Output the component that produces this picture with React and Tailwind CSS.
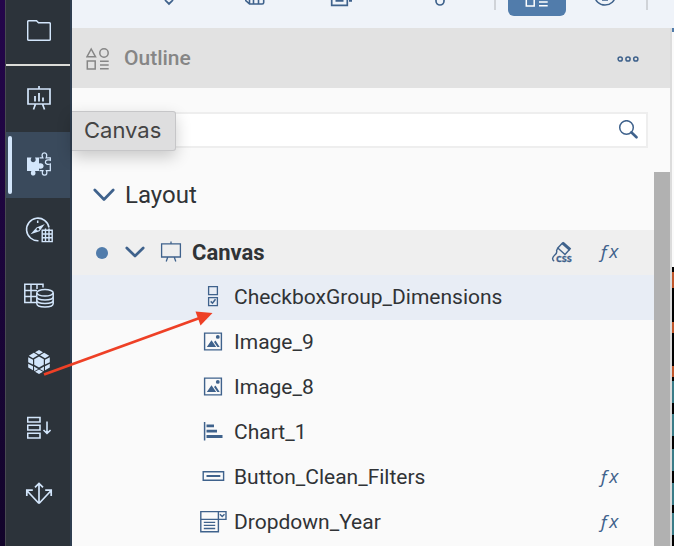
import React from "react";

function Icon({ size = 24, className = "", children }) {
  return (
    <svg
      width={size}
      height={size}
      viewBox={`0 0 ${size} ${size}`}
      fill="none"
      stroke="currentColor"
      strokeWidth="1.5"
      className={`shrink-0 ${className}`}
      aria-hidden="true"
    >
      {children}
    </svg>
  );
}

const FolderIcon = () => (
  <Icon>
    <path d="M.7 2.8Q.7 1.7 1.8 1.7H9.5L11.5 3.7H22.2Q23.3 3.7 23.3 4.8V20.2Q23.3 21.3 22.2 21.3H1.8Q.7 21.3 .7 20.2Z" />
  </Icon>
);

const BoardChartIcon = () => (
  <Icon>
    <path d="M1 3H23V18H1ZM12 0V3M8.5 18L6.5 23.5M15.5 18L17.5 23.5" strokeWidth="1.7" />
    <path d="M8 15.5V10M12 15.5V7M16 15.5V11.5" strokeWidth="1.8" />
  </Icon>
);

const PuzzleIcon = () => (
  <Icon>
    <path
      d="M0 5.5H4.5C3 8 4 10.2 6.2 10.2S9.5 8 8 5.5H12V11.5C14.5 10.6 16.6 11.9 16.6 14S14.5 17.4 12 16.4V19H8C9.2 21.5 8.3 23.5 6.2 23.5S3.2 21.5 4.4 19H0Z"
      fill="currentColor"
      stroke="none"
    />
    <path
      d="M12.5 5.8H15.8C14.3 3 15.3 .9 17.4 .9S20.4 3 19.2 5.8H23.3V8.2C20.6 7.2 18.4 8.3 18.4 10.2S20.6 13 23.3 12V18.6H19.4C20.6 21.2 19.6 23.2 17.6 23.2S14.5 21.2 15.8 18.6H12.5"
      strokeWidth="1.3"
    />
  </Icon>
);

const CompassGridIcon = () => (
  <Icon size={28}>
    <path d="M13.5 24.7A11.3 11.3 0 1 1 24 11.5" strokeWidth="1.6" />
    <path d="M5.5 18.3L11.5 11.5L19.8 8L14.5 15.2Z" fill="currentColor" stroke="none" />
    <circle cx="12.9" cy="13.2" r="1.3" fill="#2c333a" stroke="none" />
    <path d="M12.7 4.5V7" />
    <path d="M17.2 14.2H27.2V25.6H17.2ZM20.5 12.5V25.5M24 12.5V25.5M17.2 18H27M17.2 21.8H27" strokeWidth="1.4" />
  </Icon>
);

const GridDatabaseIcon = () => (
  <Icon size={30}>
    <path d="M13 21.5H.8V3.2H19V6.5M.8 9.5H13M.8 15.5H12M7 3.2V21.5M13 3.2V8" />
    <ellipse cx="21" cy="11.8" rx="8.2" ry="3.3" />
    <path d="M12.8 12V22.5C12.8 24.5 16.3 26 21 26S29.2 24.5 29.2 22.5V12M12.8 15.5C12.8 17.5 16.3 19 21 19S29.2 17.5 29.2 15.5M12.8 19C12.8 21 16.3 22.5 21 22.5S29.2 21 29.2 19" />
  </Icon>
);

const HexagonsIcon = () => (
  <Icon>
    <g fill="currentColor" stroke="none">
      <path d="M12 0L16 2.2L12 4.4L8 2.2ZM12 24L8 21.8L12 19.6L16 21.8Z" />
      <path d="M12 6.4L16.8 9.2V14.8L12 17.6L7.2 14.8V9.2Z" />
      <path d="M6.8 2.8L11 5.2L6 8.2L1.8 5.8ZM17.2 2.8L13 5.2L18 8.2L22.2 5.8Z" />
      <path d="M1.2 7.3L6 9.8V14.6L1.2 12.2ZM22.8 7.3L18 9.8V14.6L22.8 12.2Z" />
      <path d="M1.2 13.8L6 16.3V20.2L1.2 17.6ZM22.8 13.8L18 16.3V20.2L22.8 17.6Z" />
      <path d="M7 16.6L11.2 19L7.2 21.2ZM17 16.6L12.8 19L16.8 21.2Z" />
    </g>
  </Icon>
);

const StackDownIcon = () => (
  <Icon>
    <path d="M.7 1.5H13V6H.7ZM.7 9.3H13V14H.7ZM.7 17.3H13V22H.7ZM20 5.5V17M16.5 14L20 17.3L23.6 14" strokeWidth="1.6" />
  </Icon>
);

const SpreadArrowsIcon = () => (
  <Icon size={28}>
    <path d="M14 3.5V23.5M10 7.3L14 3.5L18 7.3M14 23.5L1.8 10.5M14 23.5L26.2 10.5M1.8 16V10.2H7.8M26.2 16V10.2H20.2" strokeWidth="1.7" />
  </Icon>
);

const ShapesIcon = ({ className }) => (
  <Icon className={className}>
    <path d="M5.2 2L9.5 9.8H.9ZM1.3 14H9.2V22H1.3Z" />
    <circle cx="18" cy="6" r="4.2" />
    <path d="M14 14.2H22.7M14 18H22.7M14 21.7H22.7" />
  </Icon>
);

const DotsIcon = () => (
  <Icon>
    <circle cx="4.2" cy="12" r="2.1" />
    <circle cx="12" cy="12" r="2.1" />
    <circle cx="19.8" cy="12" r="2.1" />
  </Icon>
);

const SearchIcon = () => (
  <Icon size={20}>
    <circle cx="8.500" cy="7.500" r="6.800" strokeWidth="1.5" />
    <path d="M13.3 12.3L18.5 17.3" strokeWidth="2.6" strokeLinecap="round" />
  </Icon>
);

const ChevronIcon = ({ size }) => (
  <Icon size={size}>
    <path
      d={size === 22 ? "M1.800 6L11 15.500L20.200 6" : "M1.800 5L10 13L18.200 5"}
      strokeWidth="2.7"
      strokeLinecap="round"
      strokeLinejoin="round"
    />
  </Icon>
);

const BoardIcon = () => (
  <Icon>
    <path d="M2.6 2.8H21.4V16H2.6ZM12 .5V2.8M8.8 16L7.2 20.5M15.2 16L16.8 20.5" strokeWidth="1.3" />
  </Icon>
);

const CheckboxGroupIcon = () => (
  <Icon>
    <path d="M7.6 .6H16.4V8.6H7.6ZM7.6 11.6H16.4V19.6H7.6Z" strokeWidth="1.3" />
    <path d="M9.7 15.4L11.5 17.2L14.5 13.3" strokeWidth="1.5" />
  </Icon>
);

const ImageIcon = () => (
  <Icon>
    <path d="M3.6 2.1H20.4V18.900H3.6Z" strokeWidth="1.4" />
    <path d="M5.8 16.1L10.5 9.3L15.2 16.1ZM13 11L14.5 9.5L18.7 16.1H16.4Z" fill="currentColor" stroke="none" />
    <circle cx="16.8" cy="5.900" r="1.9" fill="currentColor" stroke="none" />
  </Icon>
);

const BarChartIcon = () => (
  <Icon>
    <path d="M3.6 1V19.5" />
    <path d="M5.5 4.8H13M5.5 10.2H16M5.5 15.5H21.5" strokeWidth="2.8" />
  </Icon>
);

const ButtonIcon = () => (
  <Icon>
    <path d="M2.2 5.7H22.6V14.3H2.2Z" strokeWidth="1.4" />
    <path d="M5.500 10H19.300" strokeWidth="2" />
  </Icon>
);

const DropdownIcon = () => (
  <Icon size={28}>
    <path d="M1.8 2.6H27V10.4H1.8ZM1.8 10.4V22.8H19.4V2.6" strokeWidth="1.4" />
    <path d="M4.8 13.4H16.2M4.8 16.4H16.2M4.8 19.5H16.2M20.9 5.3L23.2 7.6L25.5 5.3" strokeWidth="1.4" />
  </Icon>
);

function StyleIcon() {
  return (
    <Icon>
      <path d="M12.500 2L19.500 8.500L15 13.500L7.800 7Z" strokeWidth="1.4" />
      <path d="M12.500 1.800L20.200 8.600" strokeWidth="3" />
      <path d="M7.800 7L6.600 9.500C7.400 12 6.200 12.900 4.800 14C2.200 16.200 1.800 19 4.200 20" strokeWidth="1.4" />
      <text x="6" y="20.500" fontSize="9" fontWeight="700" fontFamily="Open Sans, sans-serif" fill="currentColor" stroke="currentColor" strokeWidth=".3">
        CSS
      </text>
    </Icon>
  );
}

const navItems = [
  { label: "Files", icon: <FolderIcon /> },
  { label: "Stories", icon: <BoardChartIcon /> },
  { label: "Analytic Applications", icon: <PuzzleIcon />, active: true },
  { label: "Data Analyzer", icon: <CompassGridIcon /> },
  { label: "Datasets", icon: <GridDatabaseIcon /> },
  { label: "Modeler", icon: <HexagonsIcon /> },
  { label: "Data Actions", icon: <StackDownIcon /> },
  { label: "Allocations", icon: <SpreadArrowsIcon /> },
];

function SideNav() {
  return (
    <nav className="w-[66px] shrink-0 border-r-2 border-[#2f3e50] bg-[#2c333a] text-[#d3e6fb]">
      <ul>
        {navItems.map((item, i) => (
          <li
            key={item.label}
            className={`relative h-[66px] ${i === 0 ? "border-b-2 border-[#dcdcd8]" : ""} ${item.active ? "bg-[#3a4a5c]" : ""}`}
          >
            <button aria-label={item.label} className="flex h-full w-full items-center justify-center pb-[3px] pl-[2px]">
              {item.icon}
            </button>
            {item.active && (
              <>
                <span className="absolute inset-y-1 left-[2px] w-1 rounded-full bg-[#d3e6fb]" />
                <div
                  role="tooltip"
                  className="absolute -top-[21px] left-[66px] z-10 h-10 rounded-r-[3px] border border-l-0 border-[#c6c6c8] bg-[#dededf] pr-[14px] pl-3 font-['Inter',sans-serif] text-[22px] leading-[37px] text-[#444] shadow-[0_6px_16px_rgba(0,0,0,0.2)]"
                >
                  Canvas
                </div>
              </>
            )}
          </li>
        ))}
      </ul>
    </nav>
  );
}

function Toolbar() {
  const tool = "flex h-10 w-[58px] shrink-0 items-center justify-center rounded-md";
  return (
    <div role="toolbar" className="flex h-7 shrink-0 items-end overflow-hidden bg-[#eff3f9] pb-3 pl-[68px] text-[#3f628c]">
      <div className="flex gap-7">
        <button aria-label="Settings" className={tool}>
          <Icon size={20}><path d="M6.500 0V14.500L10 18L13.500 14.500V0" strokeWidth="1.8" /></Icon>
        </button>
        <button aria-label="Data" className={tool}>
          <Icon size={20}><path d="M.7 1H18.700V16.5Q18.700 18 17.200 18H4.5L.7 14.5ZM4.5 10V18M8.5 10V18M13.5 10V18" strokeWidth="1.6" /></Icon>
        </button>
        <button aria-label="Insert" className={tool}>
          <Icon><path d="M2.7 3H18.3V21.3H2.7ZM6.5 16.8H14.5M20 16.800H23" strokeWidth="1.7" /></Icon>
        </button>
      </div>
      <button aria-label="Attach" className={`${tool} ml-[41px]`}>
        <Icon><path d="M8 3V17A4 4 0 0 0 16 17V3" strokeWidth="1.7" /></Icon>
      </button>
      <div className="ml-[25px] flex h-10 items-center gap-3">
        <span className="h-7 w-[2px] bg-[#d0d3d8]" />
        <div className="flex gap-[10px]">
          <button aria-label="Outline" aria-pressed="true" className={`${tool} bg-[#517cab] text-white`}>
            <ShapesIcon />
          </button>
          <button aria-label="Help" className={tool}>
            <Icon><ellipse cx="12" cy="11.300" rx="10.3" ry="9.8" strokeWidth="1.5" /><path d="M9 16H15" /></Icon>
          </button>
        </div>
        <span className="h-7 w-[2px] bg-[#d0d3d8]" />
      </div>
    </div>
  );
}

function FxButton({ label }) {
  return (
    <button
      aria-label={`Scripts of ${label}`}
      className="w-6 pr-[3px] pb-1 text-center font-['Open_Sans',sans-serif] text-[19px] leading-6 text-[#3f628c] italic"
    >
      ƒx
    </button>
  );
}

const items = [
  { name: "CheckboxGroup_Dimensions", icon: <CheckboxGroupIcon />, selected: true },
  { name: "Image_9", icon: <ImageIcon /> },
  { name: "Image_8", icon: <ImageIcon /> },
  { name: "Chart_1", icon: <BarChartIcon /> },
  { name: "Button_Clean_Filters", icon: <ButtonIcon />, script: true },
  { name: "Dropdown_Year", icon: <DropdownIcon />, script: true },
];

function OutlineTree() {
  return (
    <div className="min-w-0 flex-1">
      <button aria-expanded="true" className="mb-3 flex h-[46px] w-full items-center gap-[10px] pl-[21px] text-[24px] text-[#303336]">
        <span className="text-[#3f628c]"><ChevronIcon size={22} /></span>
        Layout
      </button>
      <div className="flex h-[45px] items-center bg-[#efefef] pr-8 pl-6">
        <span className="h-3 w-3 rounded-full bg-[#517cab]" />
        <button aria-expanded="true" className="ml-[17px] flex items-center text-[22px] font-bold text-[#303336]">
          <span className="flex items-center gap-[14px] text-[#3f628c]">
            <ChevronIcon size={20} />
            <BoardIcon />
          </span>
          <span className="ml-[9px]">Canvas</span>
        </button>
        <div className="ml-auto flex items-center gap-6 text-[#3f628c]">
          <button aria-label="Edit CSS"><StyleIcon /></button>
          <FxButton label="Canvas" />
        </div>
      </div>
      <ul>
        {items.map((item) => (
          <li
            key={item.name}
            className={`flex h-[45px] items-center pr-8 pl-[127px] ${item.selected ? "bg-[#e8edf5]" : ""}`}
          >
            <button className="flex items-center gap-[7px] text-[21px] text-[#303336]">
              <span className="flex w-7 justify-center text-[#3f628c]">{item.icon}</span>
              {item.name}
            </button>
            {item.script && (
              <div className="ml-auto flex">
                <FxButton label={item.name} />
              </div>
            )}
          </li>
        ))}
      </ul>
    </div>
  );
}

function OutlinePanel() {
  return (
    <section className="flex min-h-0 flex-1 flex-col border-r-2 border-[#dcdcdc] bg-[#fafafa]">
      <header className="flex h-[60px] shrink-0 items-center bg-[#e2e2e2] pt-[2px] pr-[30px] pl-[14px]">
        <ShapesIcon className="text-[#868686]" />
        <h1 className="ml-[14px] text-[21px] font-medium text-[#868686]">Outline</h1>
        <button aria-label="More" className="ml-auto text-[#3f628c]"><DotsIcon /></button>
      </header>
      <label className="mx-[22px] my-6 flex h-9 shrink-0 items-center border-2 border-[#eeeeee] bg-white pr-2">
        <input type="text" aria-label="Search" className="h-full min-w-0 flex-1 px-3 text-[20px] outline-none" />
        <span className="text-[#3f628c]"><SearchIcon /></span>
      </label>
      <div className="flex min-h-0 flex-1">
        <OutlineTree />
        <div className="w-4 shrink-0 bg-[#b1b1b1]" />
      </div>
    </section>
  );
}

function CanvasEdge() {
  return (
    <div className="w-[2px] shrink-0 bg-black">
      <div className="h-7 bg-[#eff3f9]" />
      <div className="h-1 bg-[#517cab]" />
      <div className="h-[235px] bg-[#fafafa]" />
      <div className="mt-[5px] h-4 bg-[#c0572b]" />
      <div className="mt-[34px] h-[11px] bg-[#c0572b]" />
      <div className="mt-[33px] h-[11px] bg-[#c0572b]" />
      <div className="mt-1 h-[22px] bg-[#3a7c88]" />
      <div className="mt-[11px] h-[22px] bg-[#3a7c88]" />
      <div className="mt-[13px] h-[22px] bg-[#3a7c88]" />
      <div className="mt-[12px] h-[22px] bg-[#3a7c88]" />
      <div className="mt-[8px] h-[22px] bg-[#3a7c88]" />
    </div>
  );
}

export default function App() {
  return (
    <div className="relative flex h-screen overflow-hidden bg-[#fafafa] font-['Roboto',sans-serif]">
      <div className="w-[6px] shrink-0 border-r border-[#484a50] bg-linear-to-b from-[#24054b] to-[#12042a]" />
      <SideNav />
      <main className="flex min-w-0 flex-1">
        <div className="flex min-w-0 flex-1 flex-col">
          <Toolbar />
          <OutlinePanel />
        </div>
        <CanvasEdge />
      </main>
      <svg
        width="180"
        height="72"
        viewBox="0 0 180 72"
        fill="#ee4026"
        className="pointer-events-none absolute top-[308px] left-9 z-20"
        aria-hidden="true"
      >
        <path d="M8 66.5L165 9.5" stroke="#ee4026" strokeWidth="2.8" />
        <path d="M176.5 5L159.5 3.5L164.5 17.5Z" />
      </svg>
    </div>
  );
}
